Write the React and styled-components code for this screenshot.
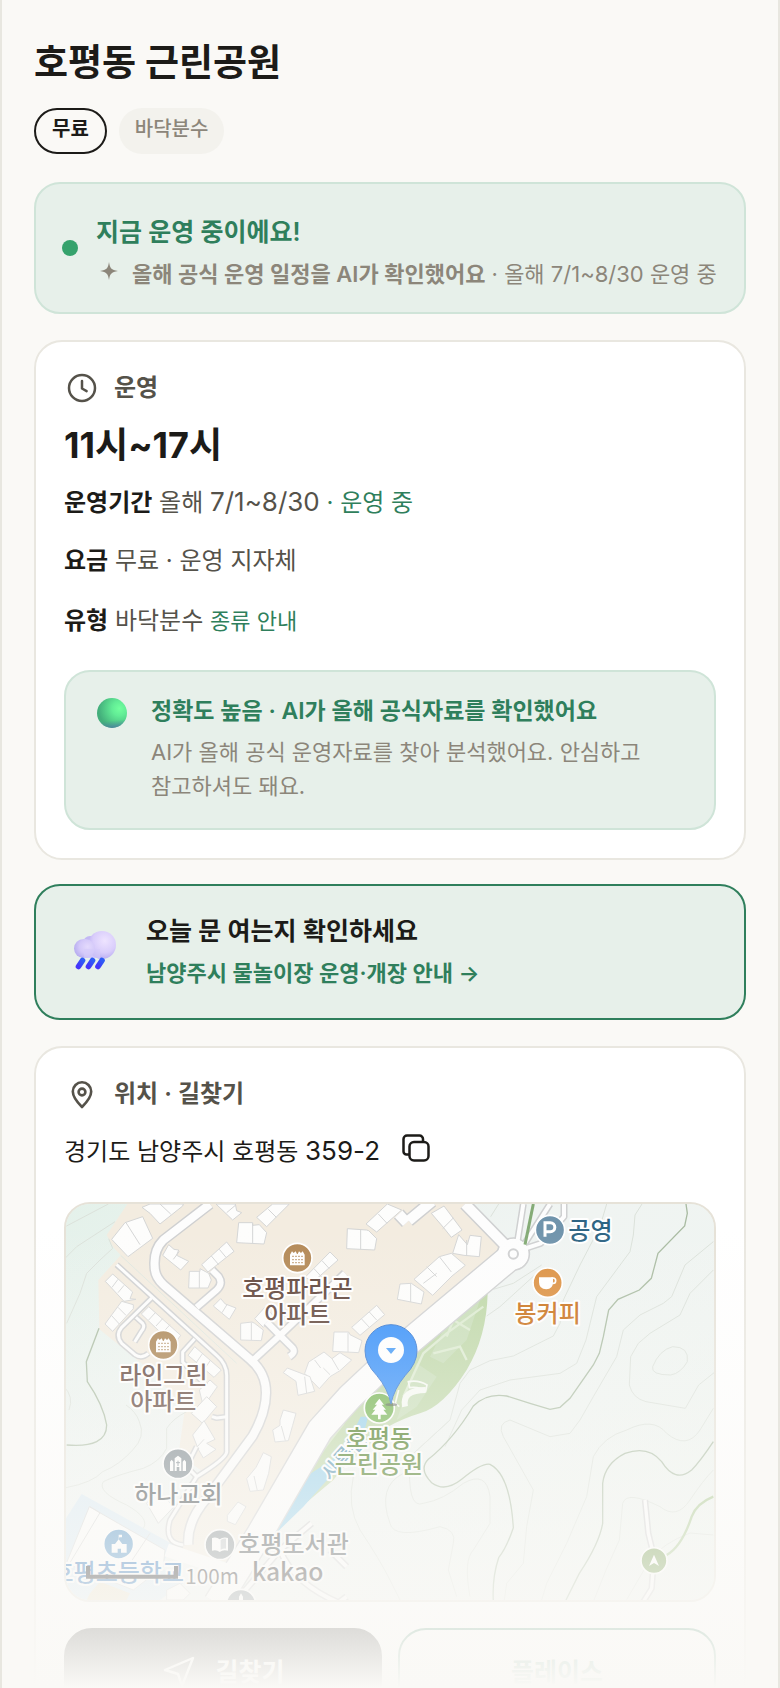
import styled, { createGlobalStyle, css } from 'styled-components';

const GlobalStyle = createGlobalStyle`
  * {
    box-sizing: border-box;
  }

  body {
    margin: 0;
    background: #faf9f6;
    color: #1c1b18;
    font-family: Inter, 'Noto Sans CJK KR', sans-serif;
    word-break: keep-all;
  }

  h1, h2, p {
    margin: 0;
  }

  a {
    color: inherit;
    text-decoration: none;
  }

  button {
    font-family: inherit;
    cursor: pointer;
  }

  svg {
    display: block;
    flex-shrink: 0;
  }
`

const Page = styled.main`
  position: relative;
  height: 100vh;
  overflow: hidden;
  padding: 38px 32px 0;
  border: solid #e8e7e0;
  border-width: 0 2px;
`

const Fade = styled.div`
  position: absolute;
  left: 0;
  right: 0;
  bottom: 0;
  height: 460px;
  background: linear-gradient(to bottom, rgba(250, 249, 246, 0), #faf9f6);
  pointer-events: none;
`

const Title = styled.h1`
  font-size: 37px;
  line-height: 50px;
  font-weight: 700;
`

const Chips = styled.div`
  display: flex;
  gap: 12px;
  margin-top: 20px;
`

const Chip = styled.span`
  height: 46px;
  padding: 0 16px;
  border-radius: 23px;
  font-size: 20px;
  line-height: 42px;
  font-weight: 500;
  color: #8c867a;
  background: #f3f2ed;

  ${({ $outlined }) => $outlined && css`
    border: 2px solid #1c1b18;
    background: transparent;
    color: #1c1b18;
    font-weight: 600;
    line-height: 38px;
  `}
`

const Status = styled.section`
  display: flex;
  align-items: center;
  gap: 18px;
  margin-top: 28px;
  padding: 21px 26px;
  border: 2px solid #cfe4d8;
  border-radius: 26px;
  background: #e7f0ea;
`

const Dot = styled.span`
  width: 16px;
  height: 16px;
  flex-shrink: 0;
  border-radius: 50%;
  background: #35a26c;
`

const StatusText = styled.div`
  padding-top: 10px;
`

const StatusTitle = styled.h2`
  font-size: 25px;
  line-height: 34px;
  font-weight: 600;
  color: #2f7f5c;
`

const StatusNote = styled.p`
  display: flex;
  gap: 10px;
  margin-top: 8px;
  font-size: 22px;
  line-height: 34px;
  color: #8c867a;

  b {
    font-weight: 600;
  }
`

const Card = styled.section`
  margin-top: 26px;
  padding: 28px;
  border: 2px solid #e9e7e0;
  border-radius: 28px;
  background: #fff;
`

const CardHeader = styled.h2`
  display: flex;
  align-items: center;
  gap: 14px;
  font-size: 24px;
  line-height: 36px;
  font-weight: 600;
  color: #55524a;
`

const Hours = styled.p`
  margin-top: 16px;
  font-size: 36px;
  line-height: 46px;
  font-weight: 700;
`

const Num = styled.span`
  font-size: 26px;
  line-height: 1;
`

const Row = styled.p`
  margin-top: ${({ $first }) => ($first ? 16 : 20)}px;
  font-size: 24px;
  line-height: ${({ $tall }) => ($tall ? 42 : 38)}px;
  color: #55524a;

  b {
    font-weight: 600;
    color: #1c1b18;
  }

  em {
    font-style: normal;
    color: #2f7f5c;
  }

  a {
    font-size: 22px;
    line-height: 1;
    color: #2f7f5c;
  }
`

const Accuracy = styled.div`
  display: flex;
  gap: 21px;
  margin-top: 28px;
  padding: 22px 28px 25px;
  border: 2px solid #cfe4d8;
  border-radius: 26px;
  background: #e7f0ea;
`

const AccuracyTitle = styled.p`
  font-size: 23px;
  line-height: 34px;
  font-weight: 600;
  color: #2f7f5c;
`

const AccuracyText = styled.p`
  margin-top: 7px;
  font-size: 22px;
  line-height: 34px;
  color: #8c867a;
`

const Notice = styled.a`
  display: flex;
  align-items: center;
  gap: 24px;
  margin-top: 24px;
  padding: 27px 34px;
  border: 2px solid #2f7f5c;
  border-radius: 26px;
  background: #e7f0ea;
`

const NoticeTitle = styled.p`
  font-size: 25px;
  line-height: 36px;
  font-weight: 600;
`

const NoticeText = styled.p`
  margin-top: 6px;
  font-size: 22px;
  line-height: 36px;
  font-weight: 600;
  color: #2f7f5c;
`

const Address = styled.div`
  display: flex;
  align-items: flex-start;
  gap: 18px;
  margin-top: 18px;
  font-size: 24px;
  line-height: 44px;
`

const CopyButton = styled.button`
  padding: 0;
  border: 0;
  background: none;
  color: #1c1b18;
`

const MapFrame = styled.div`
  height: 400px;
  margin-top: 28px;
  overflow: hidden;
  border: 2px solid #e6e2d8;
  border-radius: 26px;
  background: #eef4f0;

  svg {
    width: 100%;
    height: 100%;
  }

  text {
    font-family: 'Noto Sans CJK KR', sans-serif;
    font-size: 72px;
    font-weight: 500;
    paint-order: stroke;
    stroke: #fff;
    stroke-width: 12px;
    stroke-linejoin: round;
  }
`

const Actions = styled.div`
  display: grid;
  grid-template-columns: 1fr 1fr;
  gap: 16px;
  margin-top: 26px;
`

const Action = styled.button`
  display: flex;
  align-items: center;
  justify-content: center;
  gap: 18px;
  height: 88px;
  border: 2px solid ${({ $primary }) => ($primary ? '#1c1b18' : '#2f7f5c')};
  border-radius: 28px;
  background: ${({ $primary }) => ($primary ? '#1c1b18' : '#fff')};
  color: ${({ $primary }) => ($primary ? '#fff' : '#2f7f5c')};
  font-size: 25px;
  line-height: 36px;
  font-weight: 700;
`

const SparkleIcon = () => (
  <svg width="26" height="28" viewBox="0 0 26 28" fill="currentColor" aria-hidden="true">
    <path d="M13 5c.9 6 2.200 8 9 9-6.800 1-8.100 3-9 9-.9-6-2.200-8-9-9 6.800-1 8.100-3 9-9z" />
  </svg>
)

const ClockIcon = () => (
  <svg width="36" height="36" viewBox="0 0 36 36" fill="none" stroke="currentColor" strokeWidth="2.500" strokeLinecap="round" strokeLinejoin="round" aria-hidden="true">
    <circle cx="18" cy="18" r="13" />
    <path d="M18 11v7.500l4.600 2.600" />
  </svg>
)

const PinIcon = () => (
  <svg width="36" height="36" viewBox="0 0 36 36" fill="none" stroke="currentColor" strokeWidth="2.600" strokeLinecap="round" strokeLinejoin="round" aria-hidden="true">
    <path d="M18 31C13 26 8.800 20.800 8.800 15.500a9.200 9.200 0 0 1 18.400 0C27.200 20.800 23 26 18 31z" />
    <circle cx="18" cy="16" r="3.400" />
  </svg>
)

const CopyIcon = () => (
  <svg width="36" height="36" viewBox="0 0 36 36" fill="none" stroke="currentColor" strokeWidth="2.500" strokeLinejoin="round" aria-hidden="true">
    <rect x="11.500" y="12" width="19" height="18.500" rx="4.500" />
    <path d="M11.500 24.500h-3a3 3 0 0 1-3-3V9a3.500 3.500 0 0 1 3.500-3.500h12.500a3.500 3.500 0 0 1 3.500 3.500v3" />
  </svg>
)

const SendIcon = () => (
  <svg width="36" height="36" viewBox="0 0 36 36" fill="none" stroke="currentColor" strokeWidth="2.400" strokeLinejoin="round" aria-hidden="true">
    <path d="M32 4 4 16l13 4 4 12z" />
  </svg>
)

const OrbIcon = () => (
  <svg width="36" height="36" viewBox="0 0 36 36" aria-hidden="true">
    <defs>
      <radialGradient id="orb" cx="0.75" cy="0.35" r="0.7">
        <stop offset="0" stopColor="#72ff9e" />
        <stop offset="0.35" stopColor="#62ec96" />
        <stop offset="1" stopColor="#43ae7b" />
      </radialGradient>
      <linearGradient id="orbShade" x1="0.45" y1="0" x2="0.55" y2="1">
        <stop offset="0.75" stopColor="#4a88a0" stopOpacity="0" />
        <stop offset="1" stopColor="#5079a8" stopOpacity="0.8" />
      </linearGradient>
    </defs>
    <circle cx="18" cy="19" r="15" fill="url(#orb)" />
    <circle cx="18" cy="19" r="15" fill="url(#orbShade)" />
  </svg>
)

const RainIcon = () => (
  <svg width="52" height="52" viewBox="0 0 52 52" aria-hidden="true">
    <defs>
      <radialGradient id="cloudBig" cx="0.6" cy="0.35" r="0.7">
        <stop offset="0" stopColor="#eee4ff" />
        <stop offset="0.6" stopColor="#d9cdfb" />
        <stop offset="1" stopColor="#b5a9f0" />
      </radialGradient>
      <radialGradient id="cloudSmall" cx="0.65" cy="0.4" r="0.65">
        <stop offset="0" stopColor="#e4dafd" />
        <stop offset="0.6" stopColor="#d3c8f9" />
        <stop offset="1" stopColor="#b9aff0" />
      </radialGradient>
      <linearGradient id="drop" x1="1" y1="0" x2="0" y2="1">
        <stop offset="0" stopColor="#2e5cf5" />
        <stop offset="1" stopColor="#4434fa" />
      </linearGradient>
    </defs>
    <circle cx="20" cy="17" r="7" fill="#c3b8f4" />
    <path d="M14 21h18v11H14z" fill="#cec2f8" />
    <circle cx="32" cy="19" r="14" fill="url(#cloudBig)" />
    <rect x="4" y="13" width="21" height="19" rx="9.500" fill="url(#cloudSmall)" />
    <path d="M14 23h16v9H14z" fill="#d6cbfa" opacity=".6" />
    <g stroke="url(#drop)" strokeWidth="5.600" strokeLinecap="round">
      <path d="M12.500 34.500 8.500 40.500" />
      <path d="M22.500 34.500 18.500 40.500" />
      <path d="M32 34.500 28 40.500" />
    </g>
  </svg>
)

/* map shapes: one unit is a third of a pixel */
const buildings = [
  'M185 148 225 98 278 80 308 145 234 200z M228 98l42 66',
  'M276 52 300 42 400 42 398 48 330 102 300 70z M330 42l32 30',
  'M498 42 556 42 560 62 575 68 548 90z M530 68l26-22',
  'M620 82 668 42 718 42 650 110z M655 58l24 24',
  'M566 98 608 98 608 106 628 104 650 128 642 162 560 158z M608 100v60',
  'M892 116 950 120 956 122 980 146 974 180 890 176z M932 118v60',
  'M948 102 1012 42 1055 60 980 126z M985 72l26 28',
  'M338 196 356 164 372 178 386 180 380 196 416 214 392 240z M370 208l18-24',
  'M455 224 530 156 552 184 474 246z M484 198l22 26 M508 178l20 24',
  'M418 244 450 244 450 236 476 250 484 270 474 294 416 294z M448 244v50',
  'M765 262 840 186 864 210 790 275z M792 236l24 26 M816 212l22 24',
  'M166 274 188 252 248 306 240 326 258 328 222 334z M186 292l18-24 M204 308l18-22',
  'M165 402 215 334 250 344 250 356 188 424z M184 376l24 26 M204 352l24 24',
  'M274 372 296 350 392 436 376 458 330 426z M296 390l20-22 M318 408l20-22 M340 426l20-22',
  'M490 348 512 326 526 342 558 354 538 388z M516 368l16-26',
  'M572 400 606 396 614 400 640 420 634 452 572 450z M604 398v52',
  'M614 386 646 350 672 380 640 412z',
  'M905 412 980 346 1004 374 930 436z M934 386l24 26 M958 366l22 24',
  'M852 426 896 426 900 434 936 452 926 488 848 484z M894 428v58',
  'M764 550 776 516 822 486 846 506 870 488 905 510 870 542 840 560 808 596z M794 510l18 24 M820 534l20 20 M846 506l20 34',
  'M700 548 712 534 780 560 794 604 744 616 738 574z M764 560l6 50',
  'M414 496 434 470 514 540 492 562z M440 516l18-26 M464 536l18-26',
  'M448 600 480 570 502 590 460 650z',
  'M424 670 470 620 500 650 458 700z',
  'M428 735 462 692 495 748 470 760 498 778 460 804 446 780z M462 748l-20 22',
  'M690 690 700 660 738 670 728 706 715 752 675 756 668 720 690 706z M694 708l12 44',
  'M618 832 640 788 664 800 656 850 640 900 600 904 590 866z M612 858l10 44',
  'M532 976 564 936 588 950 556 1004 532 994z',
  'M1144 70 1182 48 1236 120 1204 142 1180 112z M1178 116l32-32',
  'M1208 190 1226 134 1252 164 1260 136 1294 140 1288 200 1242 196z M1250 150v46',
  'M1092 268 1168 200 1204 190 1246 226 1206 258 1148 316z M1130 230l30 30 M1168 200l36 46 M1120 280l40-30',
  'M1050 282 1084 280 1122 306 1114 342 1042 328z M1082 282v54',
  'M45 1130 118 950 205 1000 345 1080 340 1130 250 1200 48 1120z M120 950l30 18-90 150 M240 1120l60-90',
  'M290 940 320 900 372 950 325 1000z',
  'M350 1200 390 1180 420 1210 400 1230 350 1230z',
]

const contours = [
  'M42 112 175 42', 'M42 208 80 170 195 95', 'M50 400 90 310 110 250 150 210 188 175 176 146',
  'M42 590q30 30 15 70', 'M48 893q80-15 110-48 50-20 90-65 40-40 20-85-10-30-40-50',
  'M280 1015q20-30-50-70-90-40-70-70 40-20 120-40 50-20 70-60v-60q20-30 60-50',
  'M1346 42 1322 80 M1330 298 1390 280 1475 225 M1310 378 1350 350 1460 250',
  'M1670 42 1650 110 1590 225 1540 330 1530 400 1510 438 1390 498 1320 512 1260 540 1230 580 1200 690 1080 800',
  'M1776 42 1755 75 1750 135 1740 185 1640 320 1608 450 1580 520 1530 550 1380 570 1290 600 1235 660 1185 770',
  'M1990 155 1905 225 1865 320 1840 340 1770 375 1720 420 1700 500 1630 620 1590 690 1560 730 1500 740 1380 690q-40 10-20 50l90 160-20 110-10 110-50 60-7 50',
  'M1990 240 1920 310 1890 375 1800 430 1765 460 1742 500 1738 585q10 40 50 50l118 20 40-70 50-40',
  'M1808 530q20-50 60-60 50 0 44 45-20 35-50 40-60 0-54-25z',
  'M1990 655 1950 720q-40 60-100 10-40-50-120-10-70 20-100 80l-20 120-60 140-60 120-30 100',
  'M1990 840q-30 30-70 90-40 60-90 20-100-50-112-10l-10 110-40 90-40 100',
  'M1200 690 1080 800q-10 160 40 140 60-10 120-60 70-40 80 40v80l-50 80q-30 30-10 140',
  'M1060 850q-80 40-40 150 10 50 150 10 50 10 40 50l-15 80 25 80',
  'M910 860q-20 90 20 160 60 90 90 150l30 60', 'M1990 1035l-70-6q-80 30-120 80l-70 120',
]

const ridges = [
  'M50 765q120 10 120-60-10-60-58-130l-3-60 38-100',
  'M1908 42 1912 70 1904 108 1824 190 1812 235 1804 265 1768 300 1704 328 1676 360 1660 440 1648 490 1630 525 1560 625 1530 652 1500 658 1440 640 1370 618q-60-10-100 30-60 100-135 160-30 30 10 70 40 30 90-10 60-50 85-45 60 30 70 190-20 60-44 90-20 60-16 130',
  'M1990 755q-40 60-65 85-50 40-90-25-40-50-110-25-60 30-67 90v120q-10 60-70 150l-40 80',
]

const Pois = () => (
  <g stroke="#fff" strokeWidth="5">
    <circle cx="742" cy="204" r="44" fill="#b38855" />
    <circle cx="340" cy="465" r="44" fill="#a98250" />
    <circle cx="1500" cy="120" r="44" fill="#7094ac" />
    <circle cx="1493" cy="278" r="44" fill="#dc9040" />
    <circle cx="988" cy="654" r="45" fill="#6fb14b" />
    <circle cx="384" cy="821" r="45" fill="#77838a" />
    <circle cx="206" cy="1062" r="45" fill="#3f87c1" />
    <circle cx="510" cy="1064" r="45" fill="#7c868b" />
    <circle cx="573" cy="1242" r="44" fill="#77838a" />
    <circle cx="1812" cy="1112" r="39" fill="#6d9745" />
  </g>
)

const Apartment = ({ x, y, color }) => (
  <g transform={`translate(${x} ${y})`}>
    <path d="M-22-10-16-20-11-15-5-20-1-12 1-12 5-20 11-15 16-20 22-10V22h-44z" fill="#fff" />
    <path d="M-15-5h32M-15 5h32M-15 14h32" stroke={color} strokeWidth="4" strokeDasharray="4 5" />
  </g>
)

const roads = [
  { d: 'M480 42 340 150q-30 30-26 80 0 30 26 54l260 224q48 40 48 100 0 60-40 130L470 925q-60 70-55 140', w: 24 },
  { d: 'M440 352 500 300q20-18 6-40l-20-20', w: 18 },
  { d: 'M612 508 690 436 885 250 M690 436l-40-40 M690 436l38 38q10 14-10 26', w: 18 },
  { d: 'M200 224 500 496q30 26 30 60v230q-2 20-90 74l-80 130q-20 70 40 75', w: 9 },
  { d: 'M305 324 215 412q-20 24 0 48l40 34q20 14 40-4 M258 382l20 18q8 10-4 24l-20 32 M434 446l-36 40v30l70 70', w: 9 },
  { d: 'M530 680 500 684 486 680 M440 860l-30-30 30-60', w: 9 },
  { d: 'M1245 42 1376 176 M1070 98l-24-26 M1076 92l70-58', w: 30 },
  { d: 'M1420 42 1400 170 M1500 42 1412 180 M1412 180l60-20 70-80v-38', w: 12 },
  { d: 'M785 1000 690 1080 560 1230 M690 1080q40 100 180 160 M840 1080l50 50 M850 1250l40-30', w: 12 },
  { d: 'M1785 930 1795 1030 1812 1100 1805 1195 1780 1235', w: 10 },
]

const LocationMap = () => (
  <svg viewBox="48 42 1944 1188" preserveAspectRatio="xMidYMid slice" role="img" aria-label="호평동 근린공원 지도">
    <defs>
      <linearGradient id="hill" x1="0" y1="0" x2="1" y2="1">
        <stop offset="0" stopColor="#e4f1ea" />
        <stop offset="0.4" stopColor="#f0f4f2" />
        <stop offset="0.65" stopColor="#eff4f1" />
        <stop offset="1" stopColor="#edf3ee" />
      </linearGradient>
    </defs>
    <rect x="48" y="42" width="1944" height="1188" fill="url(#hill)" />
    <path d="M232 42 170 135 190 172 212 196 145 270 148 418 300 540 405 655 385 795 460 845 350 1010 360 1080 545 1120 640 1000 990 500 1360 200 1360 160 1245 42z" fill="#f3ece0" />
    <path d="M48 985 95 912 372 1065 330 1130 400 1180 330 1230H48z" fill="#d8e9f4" />

    <g fill="none" stroke="#dbe1da" strokeWidth="3">
      {contours.map((d) => <path key={d} d={d} />)}
    </g>
    <g fill="none" stroke="#a9bba2" strokeWidth="4">
      {ridges.map((d) => <path key={d} d={d} />)}
    </g>

    <path d="M1313 310Q1310 440 1250 540 1180 650 1110 670 1010 700 930 770L850 870 774 934 740 900 770 780 900 640 1100 450z" fill="#bed7a7" />
    <path d="M1290 330 1180 420 1140 500 1180 520 1250 450z M1100 520 1160 560 1100 650 1040 690z" fill="#c9debb" opacity=".8" />
    <path d="M1300 350 1190 430 1120 490 1060 620 M1150 490l80-20 20 40 M1190 440l20-50 50 30" fill="none" stroke="#dcebd0" strokeWidth="7" />
    <path d="M880 700 780 830 M1000 720 880 830" fill="none" stroke="#d3e5c3" strokeWidth="8" />
    <path d="M932 680h22q-10 50-34 90l-80 90-80 90-78 76-22-6 60-100 40-55 85-55 60-75z" fill="#93cfeb" />

    <g fill="#fdfdfc" stroke="#d4d5d5" strokeWidth="3">
      {buildings.map((d) => <path key={d} d={d} />)}
    </g>
    <path d="M120 1210l30-35 90 35-10 20H110z" fill="#e9dfc4" />

    <g fill="none" strokeLinejoin="round">
      {roads.map(({ d, w }) => <path key={d} d={d} stroke="#cfd0d1" strokeWidth={w + 9} />)}
      <path d="M1392 192 1060 470 900 620 810 720 630 1030 500 1240" stroke="#cfd0d1" strokeWidth="84" />
      <circle cx="1390" cy="192" r="48" fill="#fff" stroke="#cfd0d1" strokeWidth="5" />
      {roads.map(({ d, w }) => <path key={d} d={d} stroke="#fdfdfd" strokeWidth={w} />)}
      <path d="M1392 192 1060 470 900 620 810 720 630 1030 500 1240" stroke="#fdfdfd" strokeWidth="76" />
      <path d="M350 1080 560 1150" stroke="#fdfdfd" strokeWidth="40" />
      <circle cx="1390" cy="192" r="44" fill="#fdfdfd" />
      <circle cx="1390" cy="192" r="14" stroke="#cfd0d1" strokeWidth="6" />
      <path d="M1450 42 1425 164" stroke="#84ab76" strokeWidth="9" />
      <path d="M1990 920q-50 20-65 60-30 90-75 115" stroke="#a6c68c" strokeWidth="7" />
      <path d="M212 196 560 520" stroke="#dfe7df" strokeWidth="3" />
    </g>

    <g fill="none" stroke="#f7faf4">
      <path d="M1065 650q-10-50 62-50" strokeWidth="18" />
      <path d="M1075 575q30-6 56 10l-4 18q-20-14-48-10z M1046 600l-10 40 12 10" strokeWidth="5" />
    </g>

    <Pois />
    <Apartment x={742} y={204} color="#b38855" />
    <Apartment x={340} y={465} color="#a98250" />
    <path d="M1485 140v-42h16a13 13 0 0 1 0 27h-14" fill="none" stroke="#fff" strokeWidth="9" />
    <path d="M1467 262h42v14q0 22-20 22-22 0-22-22z" fill="#fff" />
    <circle cx="1509" cy="272" r="8" fill="none" stroke="#fff" strokeWidth="5" />
    <path d="M988 626l14 18h-7l13 15h-8l12 15h-20v14h-8v-14h-20l12-15h-8l13-15h-7z" fill="#fff" />
    <path d="M360 843v-28l5-6 5 6v28z M374 843v-38l10-8 10 8v38h-6v-12h-8v12z M398 843v-28l5-6 5 6v28z" fill="#fff" />
    <path d="M384 812v16M378 818h12" stroke="#77838a" strokeWidth="3" />
    <path d="M185 1088v-26h10l11-14 11 14h13v26h-17v-12h-10v12z M206 1050v-16h10v8h-8" fill="#fff" />
    <path d="M486 1044q14-4 23 4 10-8 25-4v38q-15-4-25 4-9-8-23-4z" fill="#fff" />
    <path d="M512 1050q8-5 16-4v30q-8-1-16 3z" fill="#7c868b" opacity=".5" />
    <path d="M567 1230v-10l6-10 6 10v10z" fill="#fff" />
    <path d="M1812 1094l15 34-15-9-15 9z" fill="#fff" />

    <text transform="translate(842 876) rotate(-48)" fill="#4f8fae" style={{ fontSize: 60 }}>사릉천</text>
    <g textAnchor="middle">
      <text x="742" y="322" fill="#5c4036">호평파라곤</text>
      <text x="742" y="398" fill="#5c4036">아파트</text>
      <text x="340" y="582" fill="#5c4036">라인그린</text>
      <text x="340" y="660" fill="#5c4036">아파트</text>
      <text x="385" y="938" fill="#363e42">하나교회</text>
      <text x="1493" y="396" fill="#c96f16">봉커피</text>
      <text x="987" y="772" fill="#3f7314">호평동</text>
      <text x="987" y="850" fill="#3f7314">근린공원</text>
    </g>
    <text x="1555" y="147" fill="#2f6584">공영</text>
    <text x="565" y="1090" fill="#363e42">호평도서관</text>
    <text x="402" y="1174" textAnchor="end" fill="#0f5fae">호평초등학교</text>

    <path d="M114 1128v32h264v-32" fill="none" stroke="#000" strokeWidth="12" />
    <text x="406" y="1182" fill="#111" style={{ fontSize: 62, fontWeight: 400 }}>100m</text>
    <text x="606" y="1174" fill="#111" style={{ fontSize: 74, fontWeight: 500 }}>kakao</text>

    <ellipse cx="1024" cy="644" rx="18" ry="5" fill="#444" opacity=".6" />
    <path d="M1023 642Q1014 596 980 556 945 520 945 482a78 78 0 0 1 156 0Q1101 520 1066 556 1032 596 1023 642z" fill="#2d8bfa" stroke="#2870d0" strokeWidth="3" />
    <circle cx="1023" cy="480" r="39" fill="#fff" />
    <path d="M1008 474h30l-15 18z" fill="#3a95f8" />
  </svg>
)

const App = () => {
  return (
    <>
      <GlobalStyle />
      <Page>
        <Title>호평동 근린공원</Title>
        <Chips>
          <Chip $outlined>무료</Chip>
          <Chip>바닥분수</Chip>
        </Chips>

        <Status>
          <Dot />
          <StatusText>
            <StatusTitle>지금 운영 중이에요!</StatusTitle>
            <StatusNote>
              <SparkleIcon />
              <span><b>올해 공식 운영 일정을 AI가 확인했어요</b> · 올해 7/1~8/30 운영 중</span>
            </StatusNote>
          </StatusText>
        </Status>

        <Card>
          <CardHeader><ClockIcon />운영</CardHeader>
          <Hours>11시~17시</Hours>
          <Row $first><b>운영기간</b> 올해 <Num>7/1~8/30</Num> <em>· 운영 중</em></Row>
          <Row><b>요금</b> 무료 · 운영 지자체</Row>
          <Row $tall><b>유형</b> 바닥분수 <a href="#types">종류 안내</a></Row>
          <Accuracy>
            <OrbIcon />
            <div>
              <AccuracyTitle>정확도 높음 · AI가 올해 공식자료를 확인했어요</AccuracyTitle>
              <AccuracyText>AI가 올해 공식 운영자료를 찾아 분석했어요. 안심하고 참고하셔도 돼요.</AccuracyText>
            </div>
          </Accuracy>
        </Card>

        <Notice href="#notice">
          <RainIcon />
          <div>
            <NoticeTitle>오늘 문 여는지 확인하세요</NoticeTitle>
            <NoticeText>남양주시 물놀이장 운영·개장 안내 →</NoticeText>
          </div>
        </Notice>

        <Card>
          <CardHeader><PinIcon />위치 · 길찾기</CardHeader>
          <Address>
            <span>경기도 남양주시 호평동 <Num>359-2</Num></span>
            <CopyButton type="button" aria-label="주소 복사"><CopyIcon /></CopyButton>
          </Address>
          <MapFrame>
            <LocationMap />
          </MapFrame>
          <Actions>
            <Action type="button" $primary><SendIcon />길찾기</Action>
            <Action type="button">플레이스</Action>
          </Actions>
        </Card>
        <Fade />
      </Page>
    </>
  )
}

export default App;
